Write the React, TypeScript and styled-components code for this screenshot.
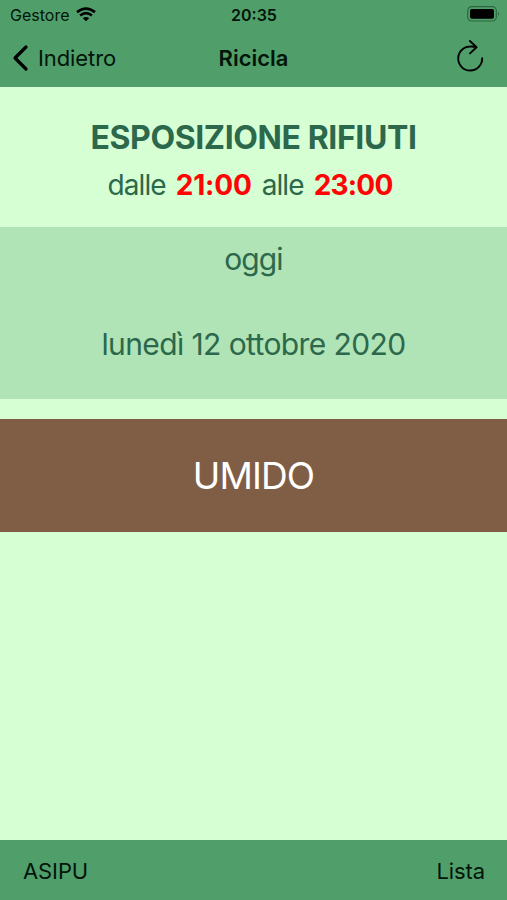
import React from 'react';
import styled, { createGlobalStyle } from 'styled-components';

const Global = createGlobalStyle`
  * { box-sizing: border-box; }
  body { margin: 0; font-family: Inter, "Liberation Sans", sans-serif; }
  svg { display: block; flex: none; }
`;
const Screen = styled.div`
  width: 507px; height: 900px; display: flex; flex-direction: column;
  background: #d7ffd4; color: #2b684c; overflow: hidden;
`;
const Header = styled.header`background: #509f6b; height: 87px; color: #04150a; flex: none;`;
const StatusBar = styled.div`
  height: 29px; padding: 0 7px 0 10px; display: grid; grid-template-columns: 1fr 46px 1fr;
  align-items: center; font-size: 16px; line-height: 20px;
`;
const Carrier = styled.div`display: flex; align-items: center; gap: 7px;`;
const Clock = styled.div`font-weight: 600; margin-left: -1px;`;
const BatterySlot = styled.div`display: flex; justify-content: flex-end; margin-top: -1px;`;
const NavBar = styled.nav`
  height: 58px; padding: 0 12px; display: grid; grid-template-columns: 1fr auto 1fr; align-items: center;
`;
const Back = styled.div`display: flex; align-items: center; gap: 8px; font-size: 22px; letter-spacing: -0.1px;`;
const Title = styled.h1`margin: 0; font-size: 22px; font-weight: 600; letter-spacing: 0;`;
const Refresh = styled.div`display: flex; justify-content: flex-end; padding: 0 11px 4px 0;`;
const Exposure = styled.section`height: 140px; flex: none; padding-top: 31px; text-align: center;`;
const Heading = styled.h2`margin: 0; font-size: 32px; line-height: 40px; font-weight: 700; letter-spacing: -0.4px;`;
const Hours = styled.p`
  margin: 7px 7px 0 0; display: flex; justify-content: center; gap: 10px;
  font-size: 28px; line-height: 40px; letter-spacing: -0.9px;
`;
const Time = styled.strong<{ $tracking: string }>`
  color: #ff0305; font-weight: 700; letter-spacing: ${({ $tracking }) => $tracking};
`;
const DateBand = styled.section`
  height: 172px; flex: none; background: #b0e3b5; text-align: center; font-size: 30px; line-height: 40px; padding-top: 12px;
`;
const DateLine = styled.div<{ $tracking: string }>`
  letter-spacing: ${({ $tracking }) => $tracking};
  & + & { margin-top: 45px; }
`;
const Waste = styled.div`
  margin-top: 20px; height: 113px; flex: none; background: #805e45; color: white; font-size: 37px;
  letter-spacing: -0.9px; display: flex; align-items: center; justify-content: center;
`;
const Footer = styled.footer`
  margin-top: auto; height: 60px; background: #509f6b; color: #04150a; padding: 1px 22px 0 23px;
  display: flex; align-items: center; justify-content: space-between; font-size: 22px; letter-spacing: -0.1px;
`;

const Wifi = () => (
  <svg width="20" height="15" viewBox="0 0 20 15" fill="none" stroke="#000" strokeWidth="2.7">
    <path d="M1 5.1Q10-2 19 5.1M4.1 8.5Q10 3.9 15.9 8.5" />
    <path d="M10 14.2 6.8 11.2Q10 8.9 13.2 11.2Z" fill="#000" stroke="none" />
  </svg>
);
const Battery = () => (
  <svg width="33" height="16" viewBox="0 0 33 16">
    <rect x=".7" y=".7" width="28.6" height="14.3" rx="4" fill="none" stroke="#2d6741" strokeWidth="1.2" />
    <rect x="3" y="3" width="24" height="9.7" rx="1.8" fill="#000" />
    <path d="M31 5.5Q33 7.8 31 10.1Z" fill="#2d6741" />
  </svg>
);
const Chevron = () => (
  <svg width="18" height="28" viewBox="0 0 18 28" fill="none" stroke="#000" strokeWidth="3.2" strokeLinecap="round" strokeLinejoin="round">
    <path d="M14 3 3 14 14 25" />
  </svg>
);
const ReloadIcon = () => (
  <svg width="28" height="34" viewBox="0 0 28 34" fill="none" stroke="#000" strokeWidth="1.9" strokeLinecap="round" strokeLinejoin="round">
    <path d="M26.2 19.3A12 12 0 1 1 14.2 7.5Q17 7.3 20.2 8.2M13.9 2 20.6 8.3 14 14.4" />
  </svg>
);

export default function App() {
  return <><Global /><Screen>
    <Header>
      <StatusBar>
        <Carrier><span>Gestore</span><Wifi /></Carrier>
        <Clock>20:35</Clock>
        <BatterySlot><Battery /></BatterySlot>
      </StatusBar>
      <NavBar>
        <Back><Chevron /><span>Indietro</span></Back>
        <Title>Ricicla</Title>
        <Refresh><ReloadIcon /></Refresh>
      </NavBar>
    </Header>
    <Exposure>
      <Heading>ESPOSIZIONE RIFIUTI</Heading>
      <Hours>
        <span>dalle</span><Time $tracking="-0.2px">21:00</Time>
        <span>alle</span><Time $tracking="-0.8px">23:00</Time>
      </Hours>
    </Exposure>
    <DateBand>
      <DateLine $tracking="-0.9px">oggi</DateLine>
      <DateLine $tracking="-0.6px">lunedì 12 ottobre 2020</DateLine>
    </DateBand>
    <Waste>UMIDO</Waste>
    <Footer><span>ASIPU</span><span>Lista</span></Footer>
  </Screen></>;
}
